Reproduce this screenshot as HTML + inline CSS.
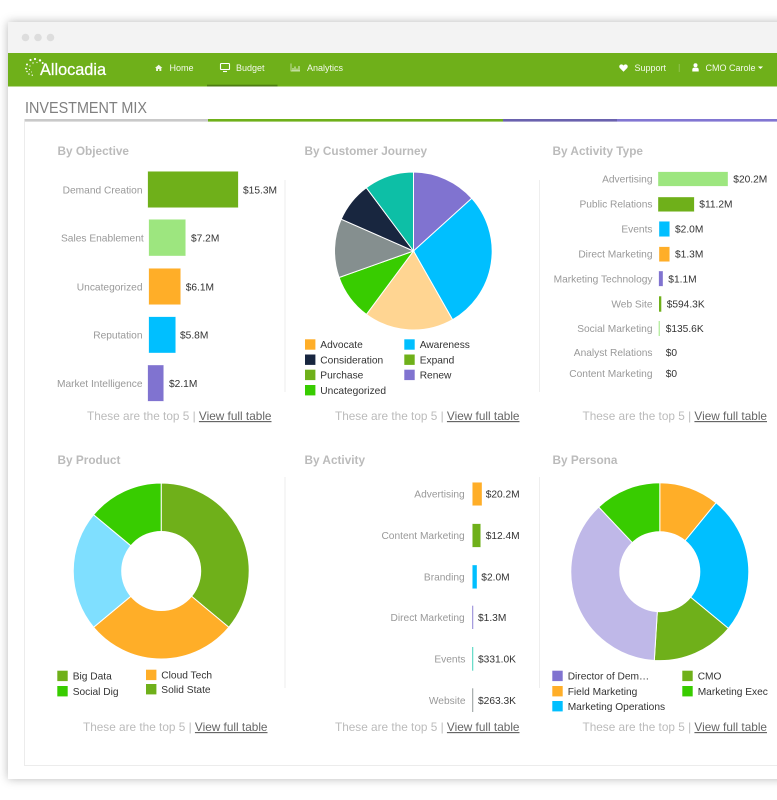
<!DOCTYPE html>
<html><head><meta charset="utf-8"><style>
html,body{margin:0;padding:0;width:777px;height:800px;overflow:hidden;background:#fff}
#w{position:absolute;left:8px;top:22px;width:820px;height:757px;background:#fff;box-shadow:0 0 9px rgba(0,0,0,.28)}
svg{position:absolute;left:0;top:0;filter:blur(.3px)}
text{font-family:"Liberation Sans",Arial,sans-serif;font-size:10.2px}
.l{fill:#999;text-anchor:end}
.v{fill:#333}
.g{fill:#333}
.h{font-size:11.8px;font-weight:bold;fill:#bbb}
.f{font-size:11.8px;fill:#bbb;text-anchor:end}
.f tspan{fill:#666;text-decoration:underline}
.n{font-size:9px;fill:#fff;fill-opacity:.92}
.b{stroke:#fff;stroke-opacity:.6;stroke-width:.6}
</style></head><body>
<div id="w"></div>
<svg width="777" height="800" viewBox="0 0 777 800">
<!-- title bar -->
<rect x="8" y="22" width="769" height="31" fill="#f3f3f3"/>
<circle cx="25.5" cy="37.5" r="3.8" fill="#ddd"/><circle cx="38" cy="37.5" r="3.8" fill="#ddd"/><circle cx="50.5" cy="37.5" r="3.8" fill="#ddd"/>
<!-- nav -->
<rect x="8" y="53" width="769" height="33.5" fill="#6fb01a"/>
<rect x="207" y="84.7" width="70.5" height="1.8" fill="#4d7d12"/>
<g fill="#fff">
<circle cx="40" cy="60.4" r="1.2"/><circle cx="35" cy="59" r="1.1"/><circle cx="30.500" cy="60" r="1.1"/><circle cx="42.700" cy="63" r="1"/><circle cx="27" cy="64.500" r="1"/><circle cx="26" cy="68.500" r=".9"/><circle cx="27" cy="71.500" r=".8"/><circle cx="29" cy="74" r=".8"/><circle cx="32.300" cy="75.200" r=".7"/><circle cx="33" cy="63" r=".7"/><circle cx="37" cy="62.500" r=".6"/><circle cx="30" cy="66" r=".6"/><circle cx="29.500" cy="69.500" r=".6"/><circle cx="31.500" cy="72" r=".5"/>
</g>
<text x="40" y="75" style="font-size:16.3px;stroke:#fff;stroke-width:.25" fill="#fff" textLength="66" lengthAdjust="spacingAndGlyphs">Allocadia</text>
<path d="M155 68l3.7-3.3 3.700 3.300h-1.100v3h-1.900v-2h-1.400v2h-1.900v-3z" fill="#fff" fill-opacity=".9"/>
<text class="n" x="169.5" y="71">Home</text>
<rect x="220.5" y="63.5" width="9" height="6" rx=".8" fill="none" stroke="#fff" stroke-width="1.1"/><path d="M223 71.5h4" stroke="#fff" stroke-width="1.1"/>
<text class="n" x="236" y="71">Budget</text>
<path d="M291 63.5v7.500h9" fill="none" stroke="#fff" stroke-opacity=".8" stroke-width=".7"/><path d="M293 71v-3M295 71v-4.500M297 71v-2.500M299 71v-5" stroke="#fff" stroke-opacity=".8" stroke-width="1"/>
<text class="n" x="307" y="71">Analytics</text>
<path d="M623.500 71.800l-3.600-3.700c-1.400-1.600-.3-3.700 1.500-3.700 1 0 1.700.5 2.100 1.200.4-.7 1.100-1.200 2.100-1.200 1.800 0 2.900 2.100 1.500 3.700z" fill="#fff"/>
<text class="n" x="634.500" y="71">Support</text>
<rect x="678.800" y="64" width=".8" height="8" fill="#fff" fill-opacity=".3"/>
<circle cx="695.500" cy="65.300" r="2" fill="#fff"/><path d="M692.300 71.500v-2c0-1.300 1-1.900 1.800-1.900h2.800c.8 0 1.800.6 1.800 1.900v2z" fill="#fff"/>
<text class="n" x="705.500" y="71">CMO Carole</text>
<path d="M758 66.500h5l-2.500 2.500z" fill="#fff"/>
<!-- heading -->
<text x="25" y="113" style="font-size:16px" fill="#808080" textLength="122" lengthAdjust="spacingAndGlyphs">INVESTMENT MIX</text>
<rect x="24.500" y="119" width="184" height="2.600" fill="#c9c9c9"/>
<rect x="208" y="119" width="295" height="2.600" fill="#6fb01a"/>
<rect x="503" y="119" width="114" height="2.600" fill="#6a62ae"/>
<rect x="617" y="119" width="160" height="2.600" fill="#8176d2"/>
<path d="M24.500 121.500V765.500H777" fill="none" stroke="#ececec"/>
<path d="M285 180v212M539.500 180v212M285 477v211M539.500 477v211" stroke="#eee" fill="none"/>

<text class="h" x="57.500" y="155">By Objective</text>
<text class="h" x="304.500" y="155">By Customer Journey</text>
<text class="h" x="552.500" y="155">By Activity Type</text>
<text class="h" x="57.500" y="464">By Product</text>
<text class="h" x="304.500" y="464">By Activity</text>
<text class="h" x="552.500" y="464">By Persona</text>

<!-- By Objective -->
<rect class="b" x="147.700" y="171.300" width="90.600" height="36.400" fill="#6fb01a"/>
<rect class="b" x="148.700" y="219.300" width="37" height="36.700" fill="#9de67f"/>
<rect class="b" x="148.700" y="268.300" width="32" height="36.400" fill="#ffae28"/>
<rect class="b" x="148.700" y="316.700" width="27" height="36.300" fill="#00bfff"/>
<rect class="b" x="147.700" y="365" width="16" height="36.300" fill="#8073d0"/>
<text class="l" x="142.500" y="193.300">Demand Creation</text><text class="v" x="243" y="193.300">$15.3M</text>
<text class="l" x="143.700" y="241.300">Sales Enablement</text><text class="v" x="191" y="241.300">$7.2M</text>
<text class="l" x="142.500" y="290.300">Uncategorized</text><text class="v" x="185.700" y="290.300">$6.1M</text>
<text class="l" x="142.500" y="338.500">Reputation</text><text class="v" x="180" y="338.500">$5.8M</text>
<text class="l" x="142.500" y="386.800">Market Intelligence</text><text class="v" x="169" y="386.800">$2.1M</text>
<text class="f" x="271.500" y="420">These are the top 5 | <tspan>View full table</tspan></text>

<!-- Pie -->
<g transform="translate(413.500 251)" stroke="#fff" stroke-width="1">
<path d="M0 0V-79A79 79 0 0 1 58.300 -52.700Z" fill="#8073d0"/>
<path d="M0 0L58.300 -52.700A79 79 0 0 1 39.100 68.700Z" fill="#00bfff"/>
<path d="M0 0L39.100 68.700A79 79 0 0 1 -47.100 63.400Z" fill="#ffd592"/>
<path d="M0 0L-47.100 63.400A79 79 0 0 1 -74.400 26.500Z" fill="#38cc00"/>
<path d="M0 0L-74.400 26.500A79 79 0 0 1 -72.300 -31.800Z" fill="#858f8f"/>
<path d="M0 0L-72.300 -31.800A79 79 0 0 1 -47.200 -63.300Z" fill="#18263f"/>
<path d="M0 0L-47.200 -63.300A79 79 0 0 1 0 -79Z" fill="#0dbfa6"/>
</g>
<rect x="305" y="339.300" width="10.400" height="10.400" fill="#ffae28"/><text class="g" x="320.300" y="348.200">Advocate</text>
<rect x="305" y="354.500" width="10.400" height="10.400" fill="#18263f"/><text class="g" x="320.300" y="363.300">Consideration</text>
<rect x="305" y="369.700" width="10.400" height="10.400" fill="#6fb01a"/><text class="g" x="320.300" y="378.500">Purchase</text>
<rect x="305" y="385" width="10.400" height="10.400" fill="#38cc00"/><text class="g" x="320.300" y="393.800">Uncategorized</text>
<rect x="404.300" y="339.300" width="10.400" height="10.400" fill="#00bfff"/><text class="g" x="419.700" y="348.200">Awareness</text>
<rect x="404.300" y="354.500" width="10.400" height="10.400" fill="#6fb01a"/><text class="g" x="419.700" y="363.300">Expand</text>
<rect x="404.300" y="369.700" width="10.400" height="10.400" fill="#8073d0"/><text class="g" x="419.700" y="378.500">Renew</text>
<text class="f" x="519.500" y="420">These are the top 5 | <tspan>View full table</tspan></text>

<!-- By Activity Type -->
<rect class="b" x="658" y="171.700" width="70" height="14.600" fill="#9de67f"/>
<rect class="b" x="658" y="197" width="36.300" height="14.700" fill="#6fb01a"/>
<rect class="b" x="659" y="221.300" width="10.700" height="15.400" fill="#00bfff"/>
<rect class="b" x="659" y="246.700" width="10.700" height="15" fill="#ffae28"/>
<rect class="b" x="658.700" y="271" width="4.300" height="15.300" fill="#8073d0"/>
<rect x="659" y="296.300" width="2.300" height="15.400" fill="#6fb01a"/>
<rect x="658.700" y="321" width="1" height="15" fill="#9de67f"/>
<text class="l" x="652.500" y="182.500">Advertising</text><text class="v" x="733.300" y="182.500">$20.2M</text>
<text class="l" x="652.500" y="207.700">Public Relations</text><text class="v" x="699.300" y="207.700">$11.2M</text>
<text class="l" x="652.500" y="232.400">Events</text><text class="v" x="675" y="232.400">$2.0M</text>
<text class="l" x="652.500" y="257.700">Direct Marketing</text><text class="v" x="675" y="257.700">$1.3M</text>
<text class="l" x="652.500" y="282.400">Marketing Technology</text><text class="v" x="668.300" y="282.400">$1.1M</text>
<text class="l" x="652.500" y="307.400">Web Site</text><text class="v" x="666.700" y="307.400">$594.3K</text>
<text class="l" x="652.500" y="332">Social Marketing</text><text class="v" x="665.700" y="332">$135.6K</text>
<text class="l" x="652.500" y="355.800">Analyst Relations</text><text class="v" x="665.700" y="355.800">$0</text>
<text class="l" x="652.500" y="376.800">Content Marketing</text><text class="v" x="665.700" y="376.800">$0</text>
<text class="f" x="767" y="420">These are the top 5 | <tspan>View full table</tspan></text>

<!-- Product donut -->
<g transform="translate(161.200 571)" stroke="#fff" stroke-width="1">
<path d="M0 0V-88A88 88 0 0 1 67.600 56.300Z" fill="#6fb01a"/>
<path d="M0 0L67.600 56.300A88 88 0 0 1 -67.600 56.300Z" fill="#ffae28"/>
<path d="M0 0L-67.600 56.300A88 88 0 0 1 -67.600 -56.300Z" fill="#7fdfff"/>
<path d="M0 0L-67.600 -56.300A88 88 0 0 1 0 -88Z" fill="#38cc00"/>
<circle r="39.500" fill="#fff"/>
</g>
<rect x="57.300" y="670.700" width="10.400" height="10.400" fill="#6fb01a"/><text class="g" x="72.700" y="679.500">Big Data</text>
<rect x="57.300" y="686" width="10.400" height="10.400" fill="#38cc00"/><text class="g" x="72.700" y="694.800">Social Dig</text>
<rect x="146" y="669.700" width="10.400" height="10.400" fill="#ffae28"/><text class="g" x="161.300" y="678.500">Cloud Tech</text>
<rect x="146" y="684" width="10.400" height="10.400" fill="#6fb01a"/><text class="g" x="161.300" y="692.800">Solid State</text>
<text class="f" x="267.500" y="731">These are the top 5 | <tspan>View full table</tspan></text>

<!-- By Activity -->
<rect class="b" x="472.300" y="482.300" width="9.700" height="23.400" fill="#ffae28"/>
<rect class="b" x="472.300" y="523.700" width="8.400" height="23.600" fill="#6fb01a"/>
<rect class="b" x="472.300" y="565" width="4.700" height="23.700" fill="#00bfff"/>
<rect x="472.300" y="605.700" width=".9" height="23.300" fill="#8073d0"/>
<rect x="472.300" y="647" width=".9" height="23.700" fill="#2ccdb4"/>
<rect x="472.300" y="688.300" width=".9" height="23.700" fill="#858f8f"/>
<text class="l" x="464.700" y="497.600">Advertising</text><text class="v" x="485.700" y="497.600">$20.2M</text>
<text class="l" x="464.700" y="539">Content Marketing</text><text class="v" x="485.700" y="539">$12.4M</text>
<text class="l" x="464.700" y="580.500">Branding</text><text class="v" x="481.300" y="580.500">$2.0M</text>
<text class="l" x="464.700" y="621">Direct Marketing</text><text class="v" x="478" y="621">$1.3M</text>
<text class="l" x="465.500" y="662.500">Events</text><text class="v" x="478" y="662.500">$331.0K</text>
<text class="l" x="465.500" y="703.800">Website</text><text class="v" x="478" y="703.800">$263.3K</text>
<text class="f" x="519.500" y="731">These are the top 5 | <tspan>View full table</tspan></text>

<!-- Persona donut -->
<g transform="translate(659.800 571.700)" stroke="#fff" stroke-width="1">
<path d="M0 0V-89A89 89 0 0 1 56.300 -68.900Z" fill="#ffae28"/>
<path d="M0 0L56.300 -68.900A89 89 0 0 1 68.600 56.700Z" fill="#00bfff"/>
<path d="M0 0L68.600 56.700A89 89 0 0 1 -5.500 88.800Z" fill="#6fb01a"/>
<path d="M0 0L-5.500 88.800A89 89 0 0 1 -61.100 -64.700Z" fill="#bfb8e8"/>
<path d="M0 0L-61.100 -64.700A89 89 0 0 1 0 -89Z" fill="#38cc00"/>
<circle r="40" fill="#fff"/>
</g>
<rect x="552.300" y="670.700" width="10.400" height="10.400" fill="#8073d0"/><text class="g" x="567.700" y="679.500">Director of Dem…</text>
<rect x="552.300" y="686" width="10.400" height="10.400" fill="#ffae28"/><text class="g" x="567.700" y="694.800">Field Marketing</text>
<rect x="552.300" y="701" width="10.400" height="10.400" fill="#00bfff"/><text class="g" x="567.700" y="709.800">Marketing Operations</text>
<rect x="682.300" y="670.700" width="10.400" height="10.400" fill="#6fb01a"/><text class="g" x="697.700" y="679.500">CMO</text>
<rect x="682.300" y="686" width="10.400" height="10.400" fill="#38cc00"/><text class="g" x="697.700" y="694.800">Marketing Exec</text>
<text class="f" x="767" y="731">These are the top 5 | <tspan>View full table</tspan></text>
</svg>
</body></html>
